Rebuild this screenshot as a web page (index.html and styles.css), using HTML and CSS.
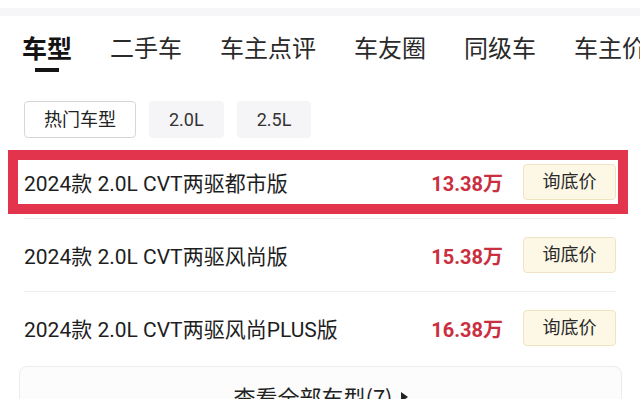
FILE: index.html
```html
<!DOCTYPE html>
<html lang="zh-CN">
<head>
<meta charset="utf-8">
<link rel="stylesheet" href="styles.css">
</head>
<body>
<div class="page">
  <div class="strip"></div>
  <nav class="tabs">
    <div class="tab active">车型</div>
    <div class="tab">二手车</div>
    <div class="tab">车主点评</div>
    <div class="tab">车友圈</div>
    <div class="tab">同级车</div>
    <div class="tab">车主价</div>
  </nav>
  <div class="chips">
    <div class="chip chip-on">热门车型</div>
    <div class="chip">2.0L</div>
    <div class="chip">2.5L</div>
  </div>
  <div class="list">
    <div class="row">
      <div class="name">2024款 2.0L CVT两驱都市版</div>
      <div class="price">13.38万</div>
      <div class="ask">询底价</div>
      <div class="highlight"></div>
    </div>
    <div class="row">
      <div class="name">2024款 2.0L CVT两驱风尚版</div>
      <div class="price">15.38万</div>
      <div class="ask">询底价</div>
    </div>
    <div class="row">
      <div class="name">2024款 2.0L CVT两驱风尚PLUS版</div>
      <div class="price">16.38万</div>
      <div class="ask">询底价</div>
    </div>
  </div>
  <div class="more">查看全部车型(7)<span class="tri"></span></div>
</div>
</body>
</html>
```
FILE: styles.css
```css
html, body {
  margin: 0;
  padding: 0;
  background: #ffffff;
  overflow: hidden;
}
.page {
  width: 640px;
  height: 399px;
  overflow: hidden;
  font-family: "Roboto", "Noto Sans CJK SC", sans-serif;
  color: #222;
}
.strip {
  height: 8px;
  margin-top: 8px;
  background: #f6f6f9;
}
.tabs {
  display: flex;
  gap: 38px;
  padding-left: 22px;
  margin-top: 15px;
  white-space: nowrap;
}
.tab {
  flex: none;
  font-family: "Noto Sans CJK SC", sans-serif;
  font-size: 24px;
  line-height: 32px;
  color: #2a2a2a;
  display: flex;
  flex-direction: column;
  align-items: center;
}
.tab.active {
  font-weight: 700;
  font-size: 25px;
  color: #141414;
}
.tab.active::after {
  content: "";
  width: 24px;
  height: 4px;
  margin-top: 5px;
  background: #141414;
}
.tab:not(.active)::after {
  content: "";
  height: 9px;
}
.chips {
  display: flex;
  gap: 13px;
  padding-left: 24px;
  margin-top: 29px;
}
.chip {
  height: 35px;
  padding: 0 19px;
  border: 1px solid #f5f5f8;
  border-radius: 4px;
  background: #f5f5f8;
  font-size: 18px;
  line-height: 35px;
  color: #333;
}
.chip-on {
  background: #fff;
  border-color: #d6d6d6;
  color: #222;
}
.list {
  margin: 8px 24px 0 24px;
}
.row {
  position: relative;
  display: flex;
  align-items: center;
  height: 72px;
  border-bottom: 1px solid #ececec;
}
.row:last-child {
  border-bottom: none;
}
.name {
  flex: 1;
  font-size: 21px;
  color: #1e1e1e;
  white-space: nowrap;
}
.price {
  font-size: 20px;
  font-weight: 700;
  color: #c92f3f;
  margin-right: 20px;
}
.ask {
  width: 91px;
  height: 34px;
  border: 1px solid #efe3c2;
  border-radius: 4px;
  background: #fdf8e6;
  font-size: 18px;
  line-height: 34px;
  text-align: center;
  color: #2a2a2a;
}
.highlight {
  position: absolute;
  left: -16px;
  right: -12px;
  top: 4px;
  bottom: 4px;
  border: 10px solid #e2344d;
  box-sizing: border-box;
  pointer-events: none;
}
.more {
  margin: 2px 18px 0 19px;
  height: 60px;
  border: 1px solid #ececec;
  border-radius: 8px;
  background: #fcfcfc;
  display: flex;
  justify-content: center;
  align-items: flex-start;
  padding-top: 14px;
  font-family: "Noto Sans CJK SC", sans-serif;
  font-size: 22px;
  line-height: 30px;
  color: #222;
}
.tri {
  width: 0;
  height: 0;
  margin-left: 8px;
  margin-top: 11px;
  border-top: 5px solid transparent;
  border-bottom: 5px solid transparent;
  border-left: 7px solid #222;
}
```
